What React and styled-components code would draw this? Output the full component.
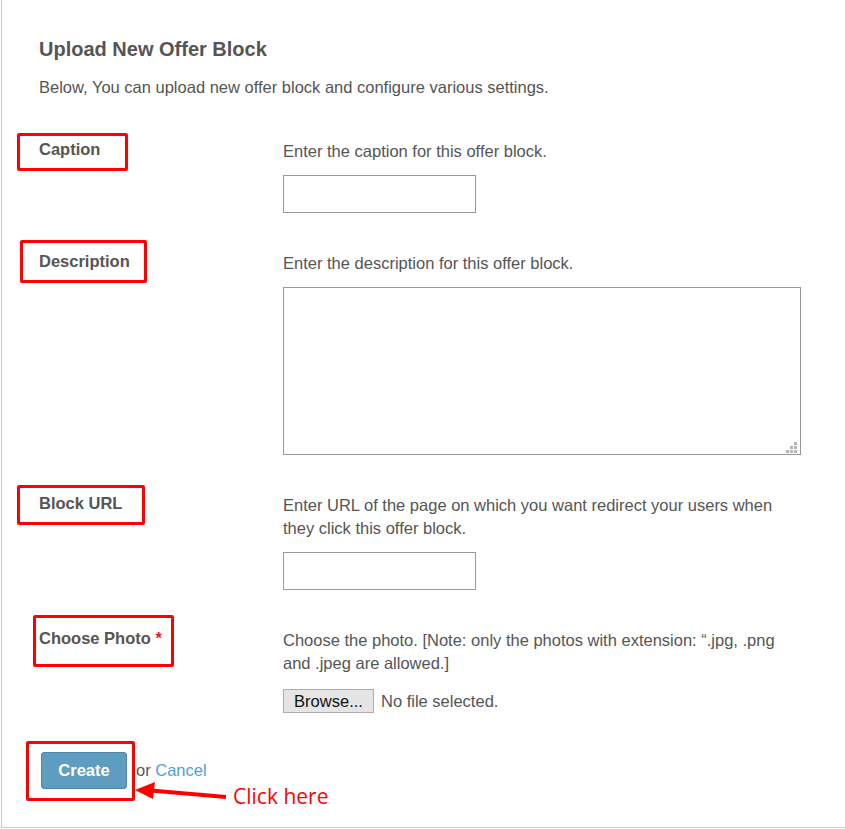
import React from 'react';
import styled, { createGlobalStyle } from 'styled-components';

const GlobalStyle = createGlobalStyle`
  html, body {
    margin: 0;
    padding: 0;
    background: #ffffff;
  }
  body {
    font-family: 'Liberation Sans', Arial, sans-serif;
    color: #555555;
  }
`;

const Panel = styled.div`
  margin-left: 1px;
  border-left: 1px solid #cccccc;
  border-bottom: 1px solid #cccccc;
  padding: 39px 0 38px 37px;
`;

const Title = styled.h2`
  margin: 0 0 18px;
  font-size: 20px;
  line-height: 20px;
  font-weight: bold;
  color: #555555;
`;

const Intro = styled.p`
  margin: 0 0 43px;
  font-size: 16.5px;
  line-height: 20px;
`;

const Row = styled.div`
  display: grid;
  grid-template-columns: 244px 520px;
  margin-bottom: 39px;
`;

const Label = styled.div`
  position: relative;
  top: -1px;
  font-size: 16.5px;
  line-height: 20px;
  font-weight: bold;
  color: #555555;
`;

const Required = styled.span`
  color: #e02020;
`;

const Highlight = styled.span`
  position: absolute;
  top: ${(p) => p.$top}px;
  left: ${(p) => p.$left}px;
  width: ${(p) => p.$w}px;
  height: ${(p) => p.$h}px;
  box-sizing: border-box;
  border: 3.5px solid #ff0000;
  border-radius: 2px;
  pointer-events: none;
`;

const Field = styled.div`
  display: flex;
  flex-direction: column;
  align-items: flex-start;
`;

const Help = styled.p`
  margin: 0 0 12px;
  font-size: 16.5px;
  line-height: 23px;
  color: #555555;
`;

const TextInput = styled.input`
  box-sizing: border-box;
  width: 193px;
  height: 38px;
  margin: 0;
  border: 1px solid #999999;
  background: #fff;
  font: inherit;
`;

const AreaWrap = styled.div`
  position: relative;
  width: 518px;
  height: 168px;
`;

const TextArea = styled.textarea`
  display: block;
  box-sizing: border-box;
  width: 518px;
  height: 168px;
  margin: 0;
  border: 1px solid #999999;
  resize: none;
  font: inherit;
`;

const Grip = styled.svg`
  position: absolute;
  right: 4px;
  bottom: 2px;
  pointer-events: none;
`;

const FileRow = styled.div`
  display: flex;
  align-items: center;
  gap: 7px;
  margin-top: 2px;
`;

const BrowseButton = styled.button`
  box-sizing: border-box;
  width: 91px;
  height: 24px;
  padding: 0;
  border: 1px solid #adadad;
  background: #e5e5e5;
  color: #111111;
  font-family: 'Liberation Sans', Arial, sans-serif;
  font-size: 16.5px;
`;

const FileName = styled.span`
  font-size: 16.5px;
  color: #555555;
`;

const Actions = styled.div`
  position: relative;
  display: flex;
  align-items: center;
  gap: 9px;
  margin-left: 2px;
  font-size: 16.5px;
`;

const ButtonWrap = styled.div`
  position: relative;
`;

const CreateButton = styled.button`
  box-sizing: border-box;
  width: 86px;
  height: 37px;
  padding: 0;
  border: 1px solid #4d86a8;
  border-radius: 3px;
  background: #5e9cc0;
  color: #ffffff;
  font-family: 'Liberation Sans', Arial, sans-serif;
  font-size: 16.5px;
  font-weight: bold;
`;

const CancelLink = styled.a`
  color: #4f9fd4;
  text-decoration: none;
`;

const Arrow = styled.svg`
  position: absolute;
  left: 92px;
  top: 26px;
  overflow: visible;
`;

const Note = styled.span`
  position: absolute;
  left: 192px;
  top: 31px;
  font-family: 'Open Sans', sans-serif;
  font-size: 21px;
  line-height: 26px;
  color: #ff0000;
  white-space: nowrap;
`;

const ResizeGrip = () => (
  <Grip width="11" height="11" viewBox="0 0 11 11">
    <g fill="#b4b4b4">
      <rect x="8" y="0" width="3" height="3" />
      <rect x="4" y="4" width="3" height="3" />
      <rect x="8" y="4" width="3" height="3" />
      <rect x="0" y="8" width="3" height="3" />
      <rect x="4" y="8" width="3" height="3" />
      <rect x="8" y="8" width="3" height="3" />
    </g>
  </Grip>
);

const App = () => {
  return (
    <>
      <GlobalStyle />
      <Panel>
        <Title>Upload New Offer Block</Title>
        <Intro>Below, You can upload new offer block and configure various settings.</Intro>

        <Row>
          <Label>
            Caption
            <Highlight $top={-6} $left={-22} $w={111} $h={38} />
          </Label>
          <Field>
            <Help>Enter the caption for this offer block.</Help>
            <TextInput type="text" />
          </Field>
        </Row>

        <Row>
          <Label>
            Description
            <Highlight $top={-11} $left={-19} $w={127} $h={43} />
          </Label>
          <Field>
            <Help>Enter the description for this offer block.</Help>
            <AreaWrap>
              <TextArea />
              <ResizeGrip />
            </AreaWrap>
          </Field>
        </Row>

        <Row>
          <Label>
            Block URL
            <Highlight $top={-8} $left={-22} $w={128} $h={40} />
          </Label>
          <Field>
            <Help>Enter URL of the page on which you want redirect your users when they click this offer block.</Help>
            <TextInput type="text" />
          </Field>
        </Row>

        <Row>
          <Label>
            Choose Photo <Required>*</Required>
            <Highlight $top={-13} $left={-6} $w={141} $h={52} />
          </Label>
          <Field>
            <Help>Choose the photo. [Note: only the photos with extension: “.jpg, .png and .jpeg are allowed.]</Help>
            <FileRow>
              <BrowseButton type="button">Browse...</BrowseButton>
              <FileName>No file selected.</FileName>
            </FileRow>
          </Field>
        </Row>

        <Actions>
          <ButtonWrap>
            <CreateButton type="button">Create</CreateButton>
            <Highlight $top={-11} $left={-15} $w={109} $h={60} />
          </ButtonWrap>
          <span>
            or <CancelLink href="#">Cancel</CancelLink>
          </span>
          <Arrow width="100" height="30" viewBox="0 0 100 30">
            <line x1="18" y1="12.5" x2="93" y2="19" stroke="#ff0000" strokeWidth="4" />
            <polygon points="2,12 22,4 20,21" fill="#ff0000" />
          </Arrow>
          <Note>Click here</Note>
        </Actions>
      </Panel>
    </>
  );
};

export default App;
